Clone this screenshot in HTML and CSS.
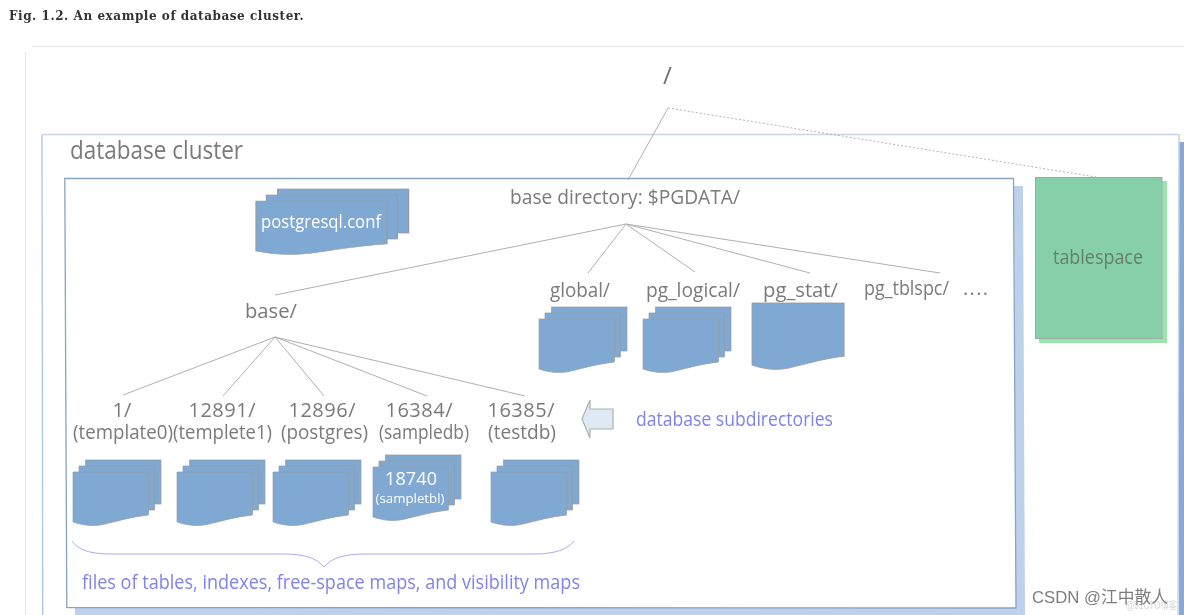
FILE: index.html
```html
<!DOCTYPE html>
<html lang="en">
<head>
<meta charset="utf-8">
<title>Fig. 1.2</title>
<link rel="stylesheet" href="styles.css">
</head>
<body>
<p class="caption">Fig. 1.2. An example of database cluster.</p>
<svg class="diagram" width="1184" height="590" viewBox="0 25 1184 590" xmlns="http://www.w3.org/2000/svg">
  <defs>
    <path id="sheet" d="M0 0H75.500V43C60 44.500 45 49 30 52.500C20 54.500 10 53.500 0 50Z"/>
    <g id="stack">
      <rect x="12.500" y="-12" width="75.500" height="44"/>
      <rect x="6" y="-6" width="75.500" height="44"/>
      <use href="#sheet"/>
    </g>
  </defs>

  <path class="frame" d="M25.500 615V52M32 46.500H1184"/>
  <rect class="cluster-shadow" x="1179" y="142" width="5" height="473"/>
  <path class="cluster-left" d="M42.700 615L42 134.500"/>
  <path class="cluster" d="M42 134.500H1179L1178 615"/>
  <path class="inner-shadow" d="M1014 186H1023L1025 615H75V607H1016Z"/>
  <path class="inner" d="M64.800 178.500H1013.500L1016 608L66.800 607.500Z"/>

  <rect class="ts-shadow" x="1039" y="181" width="128" height="162"/>
  <rect class="ts" x="1035.500" y="177.500" width="126.500" height="161"/>

  <path class="line" d="M668 108L628 180"/>
  <path class="dotted" d="M668 108L1096 177"/>
  <path class="line" d="M275 295L626 224L588 273M626 224L695 272M626 224L810 273M626 224L940 273"/>
  <path class="line" d="M123 395L275 337L223 396M275 337L324 396M275 337L427 396M275 337L525 396"/>

  <g class="sheets">
    <use href="#stack" transform="translate(256 201) scale(1.735 1)"/>
    <use href="#stack" x="539" y="319"/>
    <use href="#stack" x="643" y="319"/>
    <use href="#sheet" transform="translate(752 303) scale(1.22 1.24)"/>
    <use href="#stack" x="73" y="472"/>
    <use href="#stack" x="177" y="472"/>
    <use href="#stack" x="273" y="472"/>
    <use href="#stack" x="373" y="467"/>
    <use href="#stack" x="491" y="472"/>
  </g>

  <path class="arrow" d="M582 419L590 400V409H613V429H590V438Z"/>
  <path class="brace" d="M72 541C78 550 90 554 112 554H285C303 554 317 558 324 567C331 558 345 554 365 554H535C555 554 568 549 574 541"/>

  <text class="t t-title" x="70" y="159" textLength="173" lengthAdjust="spacingAndGlyphs">database cluster</text>
  <text class="t t-root" x="663" y="84">/</text>
  <text class="t t-md" x="510" y="204" textLength="230" lengthAdjust="spacingAndGlyphs">base directory:  $PGDATA/</text>
  <text class="t t-sm t-white" x="261" y="228" textLength="120" lengthAdjust="spacingAndGlyphs">postgresql.conf</text>
  <text class="t t-md" x="245" y="318" textLength="52" lengthAdjust="spacingAndGlyphs">base/</text>
  <text class="t t-md" x="550" y="297" textLength="60" lengthAdjust="spacingAndGlyphs">global/</text>
  <text class="t t-md" x="646" y="297" textLength="94" lengthAdjust="spacingAndGlyphs">pg_logical/</text>
  <text class="t t-md" x="763" y="297" textLength="75" lengthAdjust="spacingAndGlyphs">pg_stat/</text>
  <text class="t t-md" x="864" y="295" textLength="85" lengthAdjust="spacingAndGlyphs">pg_tblspc/</text>
  <text class="t t-md" x="963" y="295" textLength="25" lengthAdjust="spacing">....</text>

  <text class="t t-md t-mid" x="122" y="417">1/</text>
  <text class="t t-md t-mid" x="222" y="417" textLength="67" lengthAdjust="spacing">12891/</text>
  <text class="t t-md t-mid" x="322" y="417" textLength="67" lengthAdjust="spacing">12896/</text>
  <text class="t t-md t-mid" x="419" y="417" textLength="67" lengthAdjust="spacing">16384/</text>
  <text class="t t-md t-mid" x="521" y="417" textLength="67" lengthAdjust="spacing">16385/</text>
  <text class="t t-md" x="73" y="439" textLength="100" lengthAdjust="spacingAndGlyphs">(template0)</text>
  <text class="t t-md" x="173" y="439" textLength="99" lengthAdjust="spacingAndGlyphs">(templete1)</text>
  <text class="t t-md" x="281" y="439" textLength="87" lengthAdjust="spacingAndGlyphs">(postgres)</text>
  <text class="t t-md" x="379" y="439" textLength="90" lengthAdjust="spacingAndGlyphs">(sampledb)</text>
  <text class="t t-md" x="488" y="439" textLength="68" lengthAdjust="spacingAndGlyphs">(testdb)</text>

  <text class="t t-sm t-white t-mid" x="411" y="485" textLength="52" lengthAdjust="spacing">18740</text>
  <text class="t t-xs t-white t-mid" x="410" y="503" textLength="69" lengthAdjust="spacingAndGlyphs">(sampletbl)</text>

  <text class="t t-md t-violet" x="636" y="426" textLength="197" lengthAdjust="spacingAndGlyphs">database subdirectories</text>
  <text class="t t-md t-violet" x="82" y="589" textLength="498" lengthAdjust="spacingAndGlyphs">files of tables, indexes, free-space maps, and visibility maps</text>
  <text class="t t-md t-dark" x="1053" y="264" textLength="90" lengthAdjust="spacingAndGlyphs">tablespace</text>

  <text class="mark-faint" x="1126" y="609" textLength="51" lengthAdjust="spacingAndGlyphs">@51CTO博客</text>
  <text class="mark" x="1032" y="603" textLength="136" lengthAdjust="spacingAndGlyphs">CSDN @江中散人</text>
</svg>
</body>
</html>
```
FILE: styles.css
```css
html, body {
  margin: 0;
  padding: 0;
  background: #fff;
  overflow: hidden;
}
body {
  width: 1184px;
  height: 615px;
}
.caption {
  margin: 0;
  height: 25px;
  box-sizing: border-box;
  padding: 9px 0 0 9px;
  font: bold 12px/14px "DejaVu Serif", serif;
  letter-spacing: 0.55px;
  color: #333;
  filter: blur(0.3px);
}
.diagram {
  display: block;
  filter: blur(0.45px);
}
.frame { fill: none; stroke: #e6e8e8; stroke-width: 1; }
.cluster { fill: none; stroke: #c6d4e4; stroke-width: 1.5; }
.cluster-left { fill: none; stroke: #a8c6e6; stroke-width: 1.3; }
.cluster-shadow { fill: #8aa9d2; }
.inner { fill: #fff; stroke: #88a4bf; stroke-width: 1.3; }
.inner-shadow { fill: #bdd0ec; }
.ts { fill: #86cfa8; stroke: #98aca2; stroke-width: 1; }
.ts-shadow { fill: #9be4ae; }
.line { fill: none; stroke: #aeb0b2; stroke-width: 1; }
.dotted { fill: none; stroke: #b0b2b4; stroke-width: 1; stroke-dasharray: 2 2; }
.sheets { fill: #7fa8d2; stroke: #959ca4; stroke-width: 0.7; }
.arrow { fill: #dee9f3; stroke: #a8b3ad; stroke-width: 1.2; }
.brace { fill: none; stroke: #aea9ee; stroke-width: 1; }
.t {
  font-family: "Open Sans", "Liberation Sans", sans-serif;
  font-weight: 400;
  fill: #7a7a7a;
}
.t-title { font-size: 25px; }
.t-root { font-size: 24px; fill: #707070; }
.t-md { font-size: 20px; }
.t-sm { font-size: 18px; }
.t-xs { font-size: 13px; }
.t-white { fill: #fff; }
.t-violet { fill: #7f82ec; }
.t-dark { fill: #64806f; }
.t-mid { text-anchor: middle; }
.mark {
  font: 17px "Liberation Sans", "Noto Sans CJK SC", sans-serif;
  fill: #7d7d7d;
}
.mark-faint {
  font: 10px "Liberation Sans", "Noto Sans CJK SC", sans-serif;
  fill: #d8d8d8;
}
```
